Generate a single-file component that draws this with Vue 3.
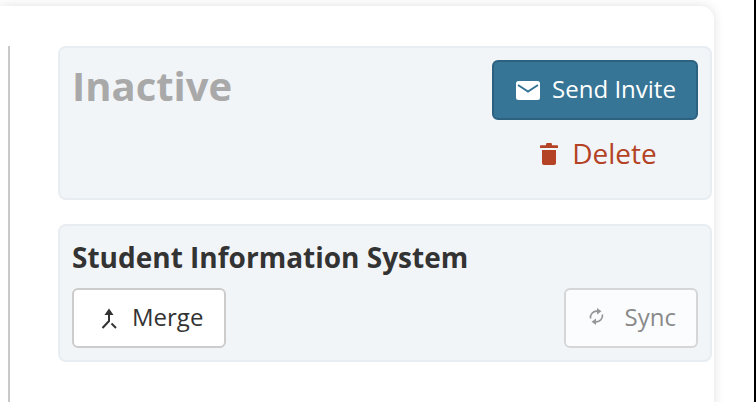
<template>
  <div class="page">
    <div class="card">
      <div class="rule"></div>
      <div class="content">
        <section class="panel status">
          <h2 class="state">Inactive</h2>
          <div class="actions">
            <button class="btn primary" type="button">
              <svg viewBox="0 0 24 19" width="24" height="19">
                <rect x="0" y="0" width="24" height="19" rx="2.500" fill="#fff" />
                <path d="M2 4 L12 10.500 L22 4" fill="none" stroke="#367596" stroke-width="2" />
              </svg>
              <span>Send Invite</span>
            </button>
            <button class="btn link" type="button">
              <svg viewBox="0 0 18 22" width="18" height="22">
                <path d="M6.500 0h5l.6 2.200H17a1 1 0 0 1 0 2.800H1a1 1 0 0 1 0-2.800h4.900z" fill="#b44224" />
                <path d="M2 7h14v13a2 2 0 0 1-2 2H4a2 2 0 0 1-2-2z" fill="#b44224" />
              </svg>
              <span>Delete</span>
            </button>
          </div>
        </section>
        <section class="panel sis">
          <h3 class="title">Student Information System</h3>
          <div class="row">
            <button class="btn outline merge" type="button">
              <svg viewBox="0 0 16 21" width="16" height="21" fill="none" stroke="#333" stroke-width="2">
                <path d="M8 5v8l-6.500 7" />
                <path d="M10.500 15.500 15 20" />
                <path d="M3.500 7h9L8 .5z" fill="#333" stroke="none" />
              </svg>
              <span>Merge</span>
            </button>
            <button class="btn outline disabled" type="button">
              <svg class="sync" viewBox="0 0 15 19" width="15" height="19" fill="none" stroke="#777" stroke-width="1.700">
                <path d="M1.600 11.500C0.800 7.500 4 3.800 8.500 4.200" />
                <path d="M13.400 7.500C14.200 11.500 11 15.200 6.500 14.800" />
                <path d="M8 1 12.500 4.300 8 7.500z" fill="#777" stroke="none" />
                <path d="M7 11.500 2.500 14.700 7 18z" fill="#777" stroke="none" />
              </svg>
              <span>Sync</span>
            </button>
          </div>
        </section>
      </div>
    </div>
    <div class="edge"></div>
  </div>
</template>

<script setup>
</script>

<style>
html, body {
  margin: 0;
  background: #fff;
}
</style>

<style scoped>
.page {
  width: 756px;
  height: 402px;
  overflow: hidden;
  display: flex;
  box-sizing: border-box;
  padding-top: 6px;
  font-family: "Open Sans", "Noto Sans", sans-serif;
  color: #333;
}
.card {
  width: 714px;
  height: 420px;
  flex: none;
  box-sizing: border-box;
  background: #fff;
  border-radius: 0 14px 0 0;
  box-shadow: 0 0 12px rgba(0, 0, 0, 0.12);
  display: flex;
  padding: 40px 2px 0 8px;
}
.rule {
  width: 2px;
  height: 400px;
  background: #c9c9c9;
  flex: none;
}
.content {
  margin-left: 48px;
  flex: 1;
  display: flex;
  flex-direction: column;
  gap: 24px;
}
.panel {
  background: #f2f5f8;
  border: 2px solid #e8edf2;
  border-radius: 8px;
  box-sizing: border-box;
}
.status {
  height: 154px;
  padding: 12px 12px 0 12px;
  display: flex;
  justify-content: space-between;
}
.state {
  margin: -2px 0 0;
  font-size: 40px;
  line-height: 56px;
  font-weight: 700;
  color: #a9a9a9;
}
.actions {
  width: 206px;
  display: flex;
  flex-direction: column;
}
.btn {
  font-family: inherit;
  font-size: 24px;
  line-height: 32px;
  height: 60px;
  box-sizing: border-box;
  display: flex;
  align-items: center;
  justify-content: center;
  border-radius: 6px;
  cursor: pointer;
}
.btn span {
  position: relative;
  top: -1px;
}
.primary {
  background: #367596;
  border: 2px solid #2c6180;
  color: #fff;
  gap: 12px;
  padding: 0 0 0 2px;
}
.link {
  background: none;
  border: 0;
  color: #b44224;
  font-size: 28px;
  height: 68px;
  gap: 14px;
  padding: 0 0 0 7px;
}
.sis {
  height: 138px;
  padding: 12px;
}
.title {
  margin: 0;
  font-size: 28px;
  line-height: 38px;
  font-weight: 700;
  color: #333;
}
.row {
  margin-top: 12px;
  display: flex;
  justify-content: space-between;
}
.outline {
  background: #fff;
  border: 2px solid #ccc;
  color: #333;
}
.merge {
  gap: 15px;
  padding: 0 21px 0 27px;
}
.disabled {
  opacity: 0.75;
  color: #666;
  gap: 21px;
  padding: 0 20px 0 23px;
}
.sync {
  margin-top: -3px;
}
.edge {
  position: absolute;
  left: 754px;
  top: 0;
  width: 2px;
  height: 402px;
  background: #000;
}
</style>
